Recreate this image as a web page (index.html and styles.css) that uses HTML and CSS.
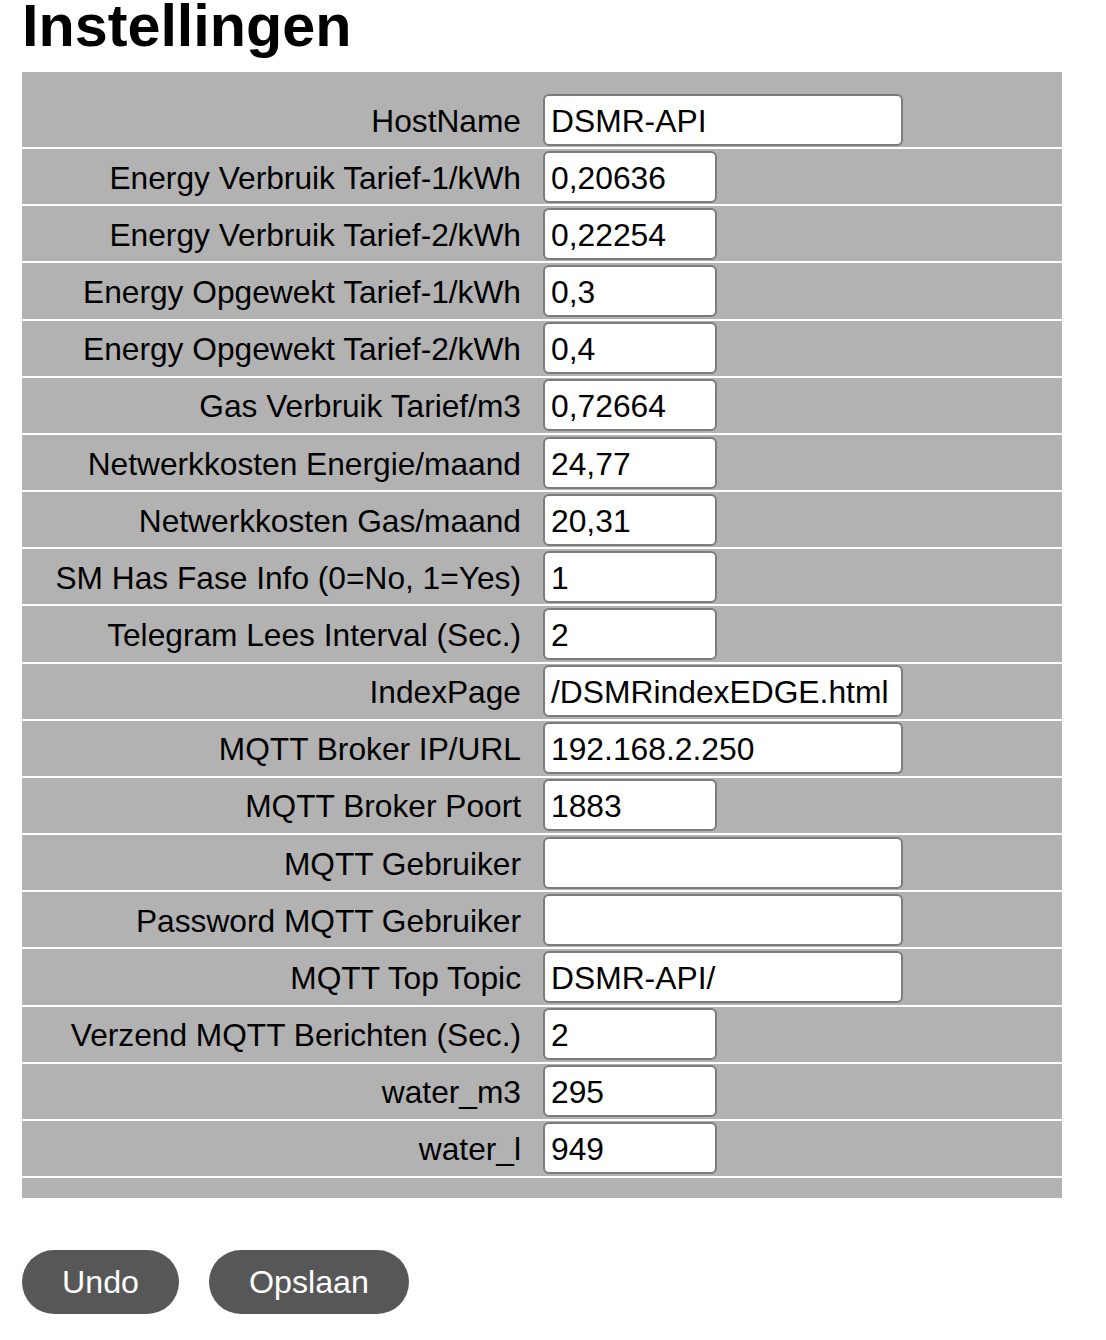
FILE: index.html
```html
<!DOCTYPE html>
<html lang="nl">
<head>
<meta charset="utf-8">
<title>Instellingen</title>
<link rel="stylesheet" href="styles.css">
</head>
<body>
<h1 class="title">Instellingen</h1>
<div class="settings">
  <div class="row"><label class="lbl">HostName</label><input class="field wide" value="DSMR-API"></div>
  <div class="row"><label class="lbl">Energy Verbruik Tarief-1/kWh</label><input class="field narrow" value="0,20636"></div>
  <div class="row"><label class="lbl">Energy Verbruik Tarief-2/kWh</label><input class="field narrow" value="0,22254"></div>
  <div class="row"><label class="lbl">Energy Opgewekt Tarief-1/kWh</label><input class="field narrow" value="0,3"></div>
  <div class="row"><label class="lbl">Energy Opgewekt Tarief-2/kWh</label><input class="field narrow" value="0,4"></div>
  <div class="row"><label class="lbl">Gas Verbruik Tarief/m3</label><input class="field narrow" value="0,72664"></div>
  <div class="row"><label class="lbl">Netwerkkosten Energie/maand</label><input class="field narrow" value="24,77"></div>
  <div class="row"><label class="lbl">Netwerkkosten Gas/maand</label><input class="field narrow" value="20,31"></div>
  <div class="row"><label class="lbl">SM Has Fase Info (0=No, 1=Yes)</label><input class="field narrow" value="1"></div>
  <div class="row"><label class="lbl">Telegram Lees Interval (Sec.)</label><input class="field narrow" value="2"></div>
  <div class="row"><label class="lbl">IndexPage</label><input class="field wide" value="/DSMRindexEDGE.html"></div>
  <div class="row"><label class="lbl">MQTT Broker IP/URL</label><input class="field wide" value="192.168.2.250"></div>
  <div class="row"><label class="lbl">MQTT Broker Poort</label><input class="field narrow" value="1883"></div>
  <div class="row"><label class="lbl">MQTT Gebruiker</label><input class="field wide" value=""></div>
  <div class="row"><label class="lbl">Password MQTT Gebruiker</label><input class="field wide" value=""></div>
  <div class="row"><label class="lbl">MQTT Top Topic</label><input class="field wide" value="DSMR-API/"></div>
  <div class="row"><label class="lbl">Verzend MQTT Berichten (Sec.)</label><input class="field narrow" value="2"></div>
  <div class="row"><label class="lbl">water_m3</label><input class="field narrow" value="295"></div>
  <div class="row"><label class="lbl">water_l</label><input class="field narrow" value="949"></div>
</div>
<div class="actions">
  <button class="btn">Undo</button>
  <button class="btn">Opslaan</button>
</div>
</body>
</html>
```
FILE: styles.css
```css
html, body {
  margin: 0;
  padding: 0;
  background: #ffffff;
}
body {
  padding: 0 22px;
  font-family: "Liberation Sans", Arial, Helvetica, sans-serif;
  color: #000;
}
.title {
  margin: 0 0 20px 0;
  font-size: 59.3px;
  line-height: 52px;
  font-weight: bold;
}
.settings {
  width: 1040px;
  background: #b2b2b2;
  padding: 20px 0;
}
.row {
  display: grid;
  grid-template-columns: 499px auto;
  column-gap: 22px;
  align-items: center;
  height: 55.16px;
  border-bottom: 2px solid #ffffff;
  box-sizing: content-box;
}
.lbl {
  text-align: right;
  font-size: 31.7px;
  padding-top: 3px;
  white-space: nowrap;
}
.field {
  box-sizing: border-box;
  height: 52px;
  margin: 0;
  padding: 3px 6px 0 6px;
  border: 2px solid #7c7c7c;
  border-radius: 6px;
  background: #ffffff;
  font-family: "Liberation Sans", Arial, Helvetica, sans-serif;
  font-size: 31.8px;
  color: #000;
  outline: none;
}
.wide {
  width: 360px;
}
.narrow {
  width: 174px;
}
.actions {
  display: flex;
  gap: 30px;
  margin-top: 52px;
}
.btn {
  height: 64px;
  padding: 2px 40px 0 40px;
  border: none;
  border-radius: 32px;
  background: #575757;
  color: #ffffff;
  font-family: "Liberation Sans", Arial, Helvetica, sans-serif;
  font-size: 32.2px;
  cursor: pointer;
}
```
